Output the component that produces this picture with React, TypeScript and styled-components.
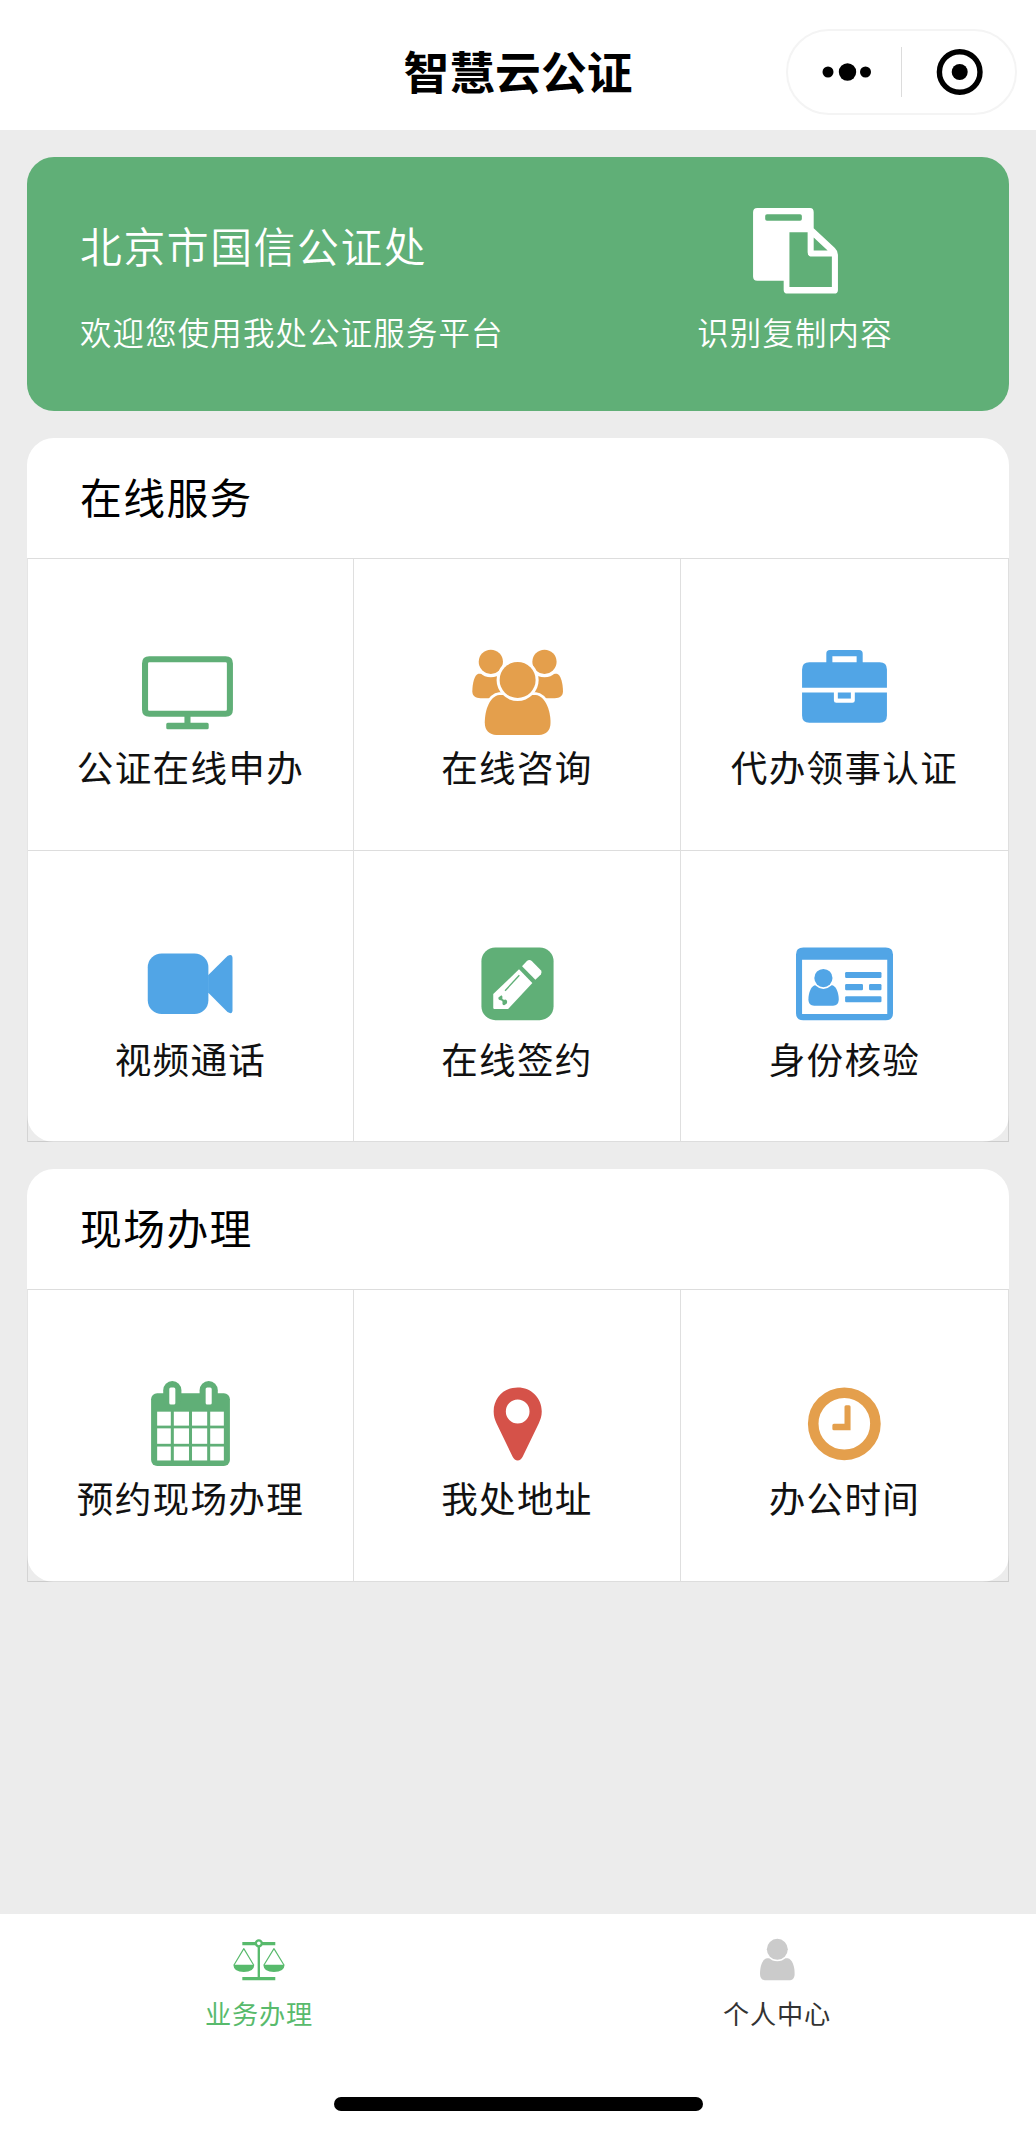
import React from "react";
import styled, { createGlobalStyle } from "styled-components";

const GREEN = "#60af77";
const BLUE = "#51a5e6";
const ORANGE = "#e49f4c";
const RED = "#d55249";

const GlobalStyle = createGlobalStyle`
  * { box-sizing: border-box; }
  body {
    margin: 0;
    background: #ececec;
    font-family: "Noto Sans CJK SC", "Noto Sans", sans-serif;
  }
`;

const Page = styled.div`
  width: 1036px;
  height: 2132px;
  display: flex;
  flex-direction: column;
  background: #ececec;
  overflow: hidden;
`;

const NavBar = styled.header`
  flex: none;
  height: 130px;
  padding: 13px 19px 0;
  display: grid;
  grid-template-columns: 231px 1fr 231px;
  align-items: center;
  background: #fff;
`;

const NavTitle = styled.h1`
  grid-column: 2;
  margin: 0;
  padding-bottom: 4px;
  font-size: 45.8px;
  line-height: 60px;
  font-weight: 700;
  text-align: center;
  color: #000;
`;

const Capsule = styled.div`
  height: 86px;
  display: grid;
  grid-template-columns: 1fr 1px 1fr;
  align-items: center;
  justify-items: center;
  border: 2px solid #f4f4f4;
  border-radius: 43px;
  svg { display: block; }
`;

const CapsuleDivider = styled.span`
  width: 1px;
  height: 50px;
  background: #dcdcdc;
`;

const Content = styled.main`
  flex: 1;
  padding: 27px 27px 0;
  display: flex;
  flex-direction: column;
  gap: 27px;
`;

const Banner = styled.section`
  height: 254px;
  padding-left: 53px;
  display: flex;
  justify-content: space-between;
  background: ${GREEN};
  border-radius: 27px;
  color: #fff;
`;

const BannerText = styled.div`
  padding-top: 58px;
`;

const BannerTitle = styled.h2`
  margin: 0 0 35px;
  font-size: 41.8px;
  letter-spacing: 1.6px;
  line-height: 60px;
  font-weight: 350;
`;

const BannerNote = styled.div`
  font-size: 31.4px;
  letter-spacing: 1.2px;
  line-height: 44px;
  font-weight: 350;
`;

const BannerAction = styled.div`
  width: 428px;
  padding-top: 45px;
  display: flex;
  flex-direction: column;
  align-items: center;
  gap: 11px;
`;

const Card = styled.section`
  background: #fff;
  border-radius: 27px;
`;

const CardTitle = styled.h2`
  margin: 0;
  height: 120px;
  padding: 0 0 5px 53px;
  display: flex;
  align-items: center;
  font-size: 41.8px;
  letter-spacing: 1.4px;
  font-weight: 400;
  color: #000;
`;

const Grid = styled.div`
  display: grid;
  grid-template-columns: 326px 327px 1fr;
  grid-auto-rows: 291.5px;
  border-top: 1px solid rgba(0, 0, 0, 0.13);
  border-left: 1px solid rgba(0, 0, 0, 0.1);
`;

const Cell = styled.div`
  padding-top: 84.5px;
  display: flex;
  flex-direction: column;
  align-items: center;
  gap: 6.5px;
  border-right: 1px solid rgba(0, 0, 0, 0.12);
  border-bottom: 1px solid rgba(0, 0, 0, 0.13);
`;

const CellLabel = styled.div`
  font-size: 36.6px;
  letter-spacing: 1.3px;
  line-height: 40px;
  color: #111;
  white-space: nowrap;
`;

const Glyph = styled.svg`
  display: block;
  width: 97px;
  height: 97px;
`;

const TabBar = styled.nav`
  flex: none;
  height: 218px;
  display: flex;
  flex-direction: column;
  align-items: center;
  background: #fff;
`;

const Tabs = styled.div`
  width: 100%;
  height: 183px;
  display: grid;
  grid-template-columns: 1fr 1fr;
`;

const Tab = styled.div<{ $active?: boolean }>`
  padding-top: 24px;
  display: flex;
  flex-direction: column;
  align-items: center;
  gap: 15px;
  font-size: 26.2px;
  letter-spacing: 0.8px;
  line-height: 34px;
  color: ${(p) => (p.$active ? "#58ba6c" : "#333")};
  svg { display: block; height: 43.3px; }
`;

const HomeIndicator = styled.div`
  width: 369px;
  height: 14px;
  border-radius: 7px;
  background: #000;
`;

const CopyIcon = () => (
  <Glyph viewBox="0 0 16 16">
    <path
      fill="#fff"
      fillRule="evenodd"
      d="M1.7 1H10.4Q11 1 11 1.7V4.35L14.5 7.6Q15 8.1 15 8.7V14.5Q15 15.1 14.4 15.1H6.7Q6.05 15.1 6.05 14.5V13H1.7Q1 13 1 12.3V1.7Q1 1 1.7 1ZM3.3 2Q3 2 3 2.3V2.8Q3 3.1 3.3 3.1H8.75Q9.05 3.1 9.05 2.8V2.3Q9.05 2 8.75 2ZM7 5V14H14V9H10.7Q10 9 10 8.3V5ZM11 5.85V8H13.3Z"
    />
  </Glyph>
);

const MonitorIcon = () => (
  <Glyph viewBox="0 0 16 16" fill={GREEN}>
    <path
      fillRule="evenodd"
      d="M1.2 2H13.8Q15 2 15 3.2V10.8Q15 12 13.8 12H8V13H10.75Q11 13 11 13.25V13.8Q11 14.05 10.75 14.05H4.25Q4 14.05 4 13.8V13.25Q4 13 4.25 13H7V12H1.2Q0 12 0 10.8V3.2Q0 2 1.2 2ZM1.2 3Q1 3 1 3.2V10.8Q1 11 1.2 11H13.8Q14 11 14 10.8V3.2Q14 3 13.8 3Z"
    />
  </Glyph>
);

const PeopleIcon = () => (
  <Glyph viewBox="0 0 16 16" fill={ORANGE}>
    <path d="M1.55 4.9C.9 5 .55 6.6 .55 7.8C.55 8.6 1.1 8.95 1.9 8.95H6V4.95Z" />
    <path d="M14.5 4.9C15.15 5 15.5 6.6 15.5 7.8C15.5 8.6 14.95 8.95 14.15 8.95H10V4.95Z" />
    <circle cx="3.6" cy="2.93" r="2.55" fill="#fff" />
    <circle cx="12.45" cy="2.93" r="2.55" fill="#fff" />
    <circle cx="3.6" cy="2.93" r="2" />
    <circle cx="12.45" cy="2.93" r="2" />
    <path
      stroke="#fff"
      strokeWidth="0.9"
      paintOrder="stroke"
      d="M5 8.4C3.4 8.6 2.6 10.9 2.6 13C2.6 14.3 3.4 15 4.5 15H11.55C12.7 15 13.45 14.3 13.45 13C13.45 10.9 12.6 8.6 11 8.4Z"
    />
    <circle cx="8.02" cy="5.93" r="3.47" fill="#fff" />
    <circle cx="8.02" cy="5.93" r="2.97" />
  </Glyph>
);

const BriefcaseIcon = () => (
  <Glyph viewBox="0 0 16 16" fill={BLUE}>
    <path d="M5 3V1.6Q5 1 5.6 1H10.4Q11 1 11 1.6V3H13.8Q15 3 15 4.2V7.2H1V4.2Q1 3 2.2 3ZM6 2V3H10V2Z" fillRule="evenodd" />
    <path d="M1 8H6.25V9.3Q6.25 9.7 6.65 9.7H9.3Q9.7 9.7 9.7 9.3V8H15V11.8Q15 13 13.8 13H2.2Q1 13 1 11.8Z" />
    <path d="M6.9 8H9.05V9H6.9Z" />
  </Glyph>
);

const VideoIcon = () => (
  <Glyph viewBox="0 0 16 16" fill={BLUE}>
    <rect x="0.95" y="3.05" width="10" height="10" rx="2.3" />
    <path d="M10.9 6.65L14.1 3.45Q14.9 3 14.93 3.8V12.4Q14.9 13.2 14.1 12.7L10.9 9.5Z" />
  </Glyph>
);

const PencilIcon = () => (
  <Glyph viewBox="0 0 16 16">
    <rect x="2.05" y="2.05" width="11.9" height="12" rx="2.3" fill={GREEN} />
    <path fill="#fff" d="M8.75 5.15L9.55 4.3Q9.95 3.95 10.35 4.3L11.85 5.8Q12.15 6.15 11.85 6.5L10.95 7.4Z" />
    <path fill="#fff" d="M8.25 5.65L10.45 7.9L6.45 12.2H4.2Q4 12.2 4 12V9.75Z" />
    <path stroke={GREEN} strokeWidth="0.22" d="M8.3 6.65L5.95 9.2" />
    <path fill={GREEN} d="M4.85 10.3L5.35 9.95Q5.6 10.1 5.5 10.5Q5.6 10.75 6.05 10.65Q6.45 10.9 6.2 11.35L5.8 11.6Q5.4 11.5 5.55 11L5.3 10.75Q4.8 10.8 4.85 10.3Z" />
  </Glyph>
);

const IdCardIcon = () => (
  <Glyph viewBox="0 0 16 16" fill={BLUE}>
    <path fillRule="evenodd" d="M1.2 2.05H14.8Q16 2.05 16 3.2V12.9Q16 14.05 14.8 14.05H1.2Q0 14.05 0 12.9V3.2Q0 2.05 1.2 2.05ZM1 4.1V13.05H15.05V4.1Z" />
    <path d="M3.1 8.3C2.4 8.5 2.05 9.7 2.05 10.6C2.05 11.3 2.4 11.65 3 11.65H6.1C6.7 11.65 7.05 11.3 7.05 10.6C7.05 9.7 6.7 8.5 6 8.3Z" />
    <circle cx="4.52" cy="7.15" r="1.75" fill="#fff" />
    <circle cx="4.52" cy="7.1" r="1.5" />
    <rect x="8.1" y="6.1" width="6" height="1" rx="0.2" />
    <rect x="8.1" y="8.1" width="2.95" height="1" rx="0.2" />
    <rect x="12.05" y="8.1" width="2.05" height="1" rx="0.2" />
    <rect x="8.1" y="10.1" width="6" height="1" rx="0.2" />
  </Glyph>
);

const CalendarIcon = () => (
  <Glyph viewBox="0 0 16 16" fill={GREEN}>
    <rect x="1.5" y="3" width="13" height="12" rx="1" />
    <rect x="3.5" y="1" width="3" height="4.5" rx="1.5" />
    <rect x="9.5" y="1" width="3" height="4.5" rx="1.5" />
    <g fill="#fff">
      <rect x="4.5" y="2.05" width="1" height="2.8" rx="0.25" />
      <rect x="10.5" y="2.05" width="1" height="2.8" rx="0.25" />
      {[
        [6.05, 2.3],
        [8.8, 2.55],
        [11.8, 2.3],
      ].map(([y, h]) =>
        [
          [2.5, 2.25],
          [5.25, 2.5],
          [8.25, 2.5],
          [11.25, 2.25],
        ].map(([x, w]) => <rect key={`${x}-${y}`} x={x} y={y} width={w} height={h} />)
      )}
    </g>
  </Glyph>
);

const PinIcon = () => (
  <Glyph viewBox="0 0 16 16" fill={RED}>
    <path
      fillRule="evenodd"
      d="M8.03 2.05C10.3 2.05 12 3.8 12 6C12 6.8 11.8 7.3 11.5 8L8.85 13.5Q8.55 14.1 8.03 14.1Q7.5 14.1 7.2 13.5L4.55 8C4.25 7.3 4.07 6.8 4.07 6C4.07 3.8 5.75 2.05 8.03 2.05ZM8.03 4.05A1.95 1.97 0 1 0 8.03 8A1.95 1.97 0 1 0 8.03 4.05Z"
    />
  </Glyph>
);

const ClockIcon = () => (
  <Glyph viewBox="0 0 16 16">
    <circle cx="7.97" cy="8.05" r="5.13" fill="none" stroke={ORANGE} strokeWidth="1.75" />
    <path fill={ORANGE} d="M8.25 5H8.75Q9 5 9 5.25V9.1H6.25Q6 9.1 6 8.85V8.3Q6 8.05 6.25 8.05H8V5.25Q8 5 8.25 5Z" />
  </Glyph>
);

const ScalesIcon = () => (
  <svg viewBox="0 0 162 130" fill="#58ba6c">
    <path d="M31 12H130V22H31ZM31 117H130V127H31ZM77 20H84V120H77Z" />
    <circle cx="80.5" cy="16" r="9" fill="#fff" stroke="#58ba6c" strokeWidth="7" />
    <path d="M4 80H67Q66 102 35.5 102Q5 102 4 80ZM94 80H158Q157 102 126 102Q95 102 94 80Z" />
    <path fill="none" stroke="#58ba6c" strokeWidth="3.5" strokeLinejoin="round" d="M6 81L35.5 32L65 81M96 81L126 32L156 81" />
  </svg>
);

const PersonIcon = () => (
  <svg viewBox="0 0 110 130" fill="#cbcbcb">
    <path d="M24 61C10 63 3 85 3 107C3 120 9 127 21 127H89C101 127 107 120 107 107C107 85 100 63 86 61Z" />
    <circle cx="55" cy="34" r="36" fill="#fff" />
    <circle cx="55" cy="34" r="31.5" />
  </svg>
);

type Service = { label: string; Icon: React.FC };

const onlineServices: Service[] = [
  { label: "公证在线申办", Icon: MonitorIcon },
  { label: "在线咨询", Icon: PeopleIcon },
  { label: "代办领事认证", Icon: BriefcaseIcon },
  { label: "视频通话", Icon: VideoIcon },
  { label: "在线签约", Icon: PencilIcon },
  { label: "身份核验", Icon: IdCardIcon },
];

const onsiteServices: Service[] = [
  { label: "预约现场办理", Icon: CalendarIcon },
  { label: "我处地址", Icon: PinIcon },
  { label: "办公时间", Icon: ClockIcon },
];

const ServiceCard = ({ title, items }: { title: string; items: Service[] }) => (
  <Card>
    <CardTitle>{title}</CardTitle>
    <Grid>
      {items.map(({ label, Icon }) => (
        <Cell key={label}>
          <Icon />
          <CellLabel>{label}</CellLabel>
        </Cell>
      ))}
    </Grid>
  </Card>
);

export default function App() {
  return (
    <>
      <GlobalStyle />
      <Page>
        <NavBar>
          <NavTitle>智慧云公证</NavTitle>
          <Capsule>
            <svg width="52" height="20" viewBox="0 0 52 20">
              <circle cx="9" cy="10" r="5.5" />
              <circle cx="28.5" cy="10" r="8.7" />
              <circle cx="46.5" cy="10" r="5.5" />
            </svg>
            <CapsuleDivider />
            <svg width="48" height="48" viewBox="0 0 48 48">
              <circle cx="24.7" cy="24" r="20.3" fill="none" stroke="#000" strokeWidth="5.4" />
              <circle cx="24.7" cy="24" r="8" />
            </svg>
          </Capsule>
        </NavBar>
        <Content>
          <Banner>
            <BannerText>
              <BannerTitle>北京市国信公证处</BannerTitle>
              <BannerNote>欢迎您使用我处公证服务平台</BannerNote>
            </BannerText>
            <BannerAction>
              <CopyIcon />
              <BannerNote>识别复制内容</BannerNote>
            </BannerAction>
          </Banner>
          <ServiceCard title="在线服务" items={onlineServices} />
          <ServiceCard title="现场办理" items={onsiteServices} />
        </Content>
        <TabBar>
          <Tabs>
            <Tab $active>
              <ScalesIcon />
              业务办理
            </Tab>
            <Tab>
              <PersonIcon />
              个人中心
            </Tab>
          </Tabs>
          <HomeIndicator />
        </TabBar>
      </Page>
    </>
  );
}
